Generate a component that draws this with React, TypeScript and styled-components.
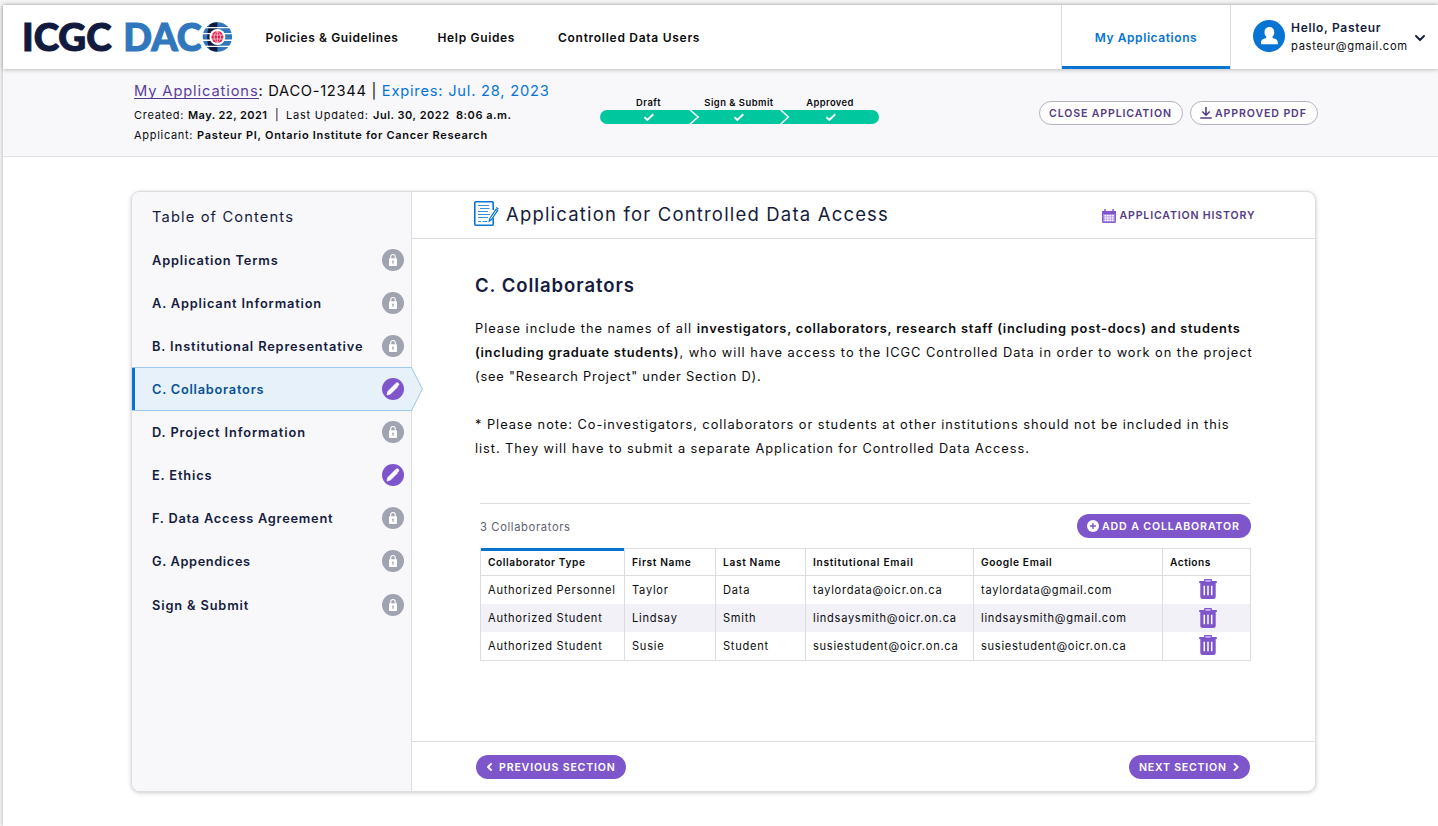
import React from 'react';
import styled, { createGlobalStyle, css } from 'styled-components';

const color = {
  ink: '#0b0b0d',
  navy: '#151c3d',
  blue: '#0774d3',
  purple: '#7f55cc',
  plum: '#543c84',
  green: '#00c79d',
  lock: '#a0a3b0',
  line: '#dcdde1',
  panel: '#f8f8fb',
};

const GlobalStyle = createGlobalStyle`
  * { box-sizing: border-box; }
  body {
    margin: 0;
    background: #f4f4f4;
    color: ${color.ink};
    font-family: 'Inter', 'Open Sans', sans-serif;
    overflow: hidden;
  }
  svg { display: block; flex: none; }
`;

type Tracked = { $ls?: number };
const tracking = css<Tracked>`
  letter-spacing: ${({ $ls = 0.75 }) => $ls}px;
  white-space: pre;
`;

const Page = styled.div`
  height: 821px;
  margin: 5px 0 0 3px;
  background: #fff;
  box-shadow: 0 0 4px rgba(0, 0, 0, 0.28);
`;

/* Header */
const TopBar = styled.header`
  position: relative;
  display: flex;
  height: 64px;
  padding-left: 20px;
  background: #fff;
  box-shadow: 0 1px 4px rgba(0, 0, 0, 0.24);
`;
const LogoLink = styled.a`
  display: flex;
  width: 242.5px;
  padding-top: 11px;
`;
const NavLink = styled.a<Tracked & { $width: number }>`
  ${tracking}
  width: ${({ $width }) => $width}px;
  font-size: 12px;
  font-weight: 600;
  line-height: 66px;
`;
const Tab = styled.a<Tracked>`
  ${tracking}
  width: 170px;
  margin-left: auto;
  border: solid ${color.line};
  border-width: 0 1px;
  box-shadow: inset 0 -3px ${color.blue};
  color: ${color.blue};
  font-size: 12px;
  font-weight: 600;
  line-height: 66px;
  text-align: center;
`;
const User = styled.div`
  display: flex;
  width: 207px;
  padding: 14px 0 0 22px;
`;
const UserText = styled.div`
  width: 130px;
  padding-left: 6px;
`;
const UserName = styled.div<Tracked>`
  ${tracking}
  color: ${color.navy};
  font-size: 12px;
  font-weight: 600;
  line-height: 18px;
`;
const UserEmail = styled.div<Tracked>`
  ${tracking}
  font-size: 11.2px;
  line-height: 18px;
`;
const ChevronBox = styled.div`
  padding-top: 16px;
`;

/* Application summary */
const Summary = styled.section`
  display: flex;
  height: 88px;
  padding: 10px 0 0 131px;
  border-bottom: 1px solid #dfe1e8;
  background: ${color.panel};
`;
const Details = styled.div`
  width: 466px;
`;
const Headline = styled.div`
  display: flex;
  height: 26px;
  font-size: 14.7px;
  line-height: 24px;
`;
const Crumb = styled.a<Tracked>`
  ${tracking}
  height: 20px;
  border-bottom: 1px solid ${color.plum};
  color: #5b3f97;
`;
const Expiry = styled.span<Tracked>`
  ${tracking}
  color: ${color.blue};
`;
const Meta = styled.div`
  display: flex;
  font-size: 11px;
  line-height: 20px;
`;
const Span = styled.span<Tracked & { $w?: number }>`
  ${tracking}
  ${({ $w }) => $w && `width: ${$w}px;`}
`;
const Strong = styled.b<Tracked & { $w?: number }>`
  ${tracking}
  font-weight: 600;
  ${({ $w }) => $w && `width: ${$w}px;`}
`;
const Progress = styled.div`
  width: 279px;
  padding-top: 18px;
`;
const StepLabels = styled.div`
  display: grid;
  grid-template-columns: 97px 84px 98px;
  height: 13px;
`;
const StepLabel = styled.span<Tracked>`
  ${tracking}
  font-size: 9.4px;
  font-weight: 600;
  line-height: 12px;
  text-align: center;
`;
const SummaryActions = styled.div`
  display: flex;
  gap: 7px;
  margin-left: 160px;
  padding-top: 22px;
`;
const OutlineButton = styled.button<Tracked & { $w: number }>`
  ${tracking}
  display: flex;
  align-items: center;
  width: ${({ $w }) => $w}px;
  height: 24px;
  padding: 0 0 0 9px;
  border: 1px solid #b4b2c0;
  border-radius: 12px;
  background: #fff;
  color: ${color.plum};
  font: 600 10.6px 'Inter', sans-serif;
`;

/* Card */
const Card = styled.main`
  display: flex;
  width: 1185px;
  height: 601px;
  margin: 34px 0 0 128px;
  border: 1px solid ${color.line};
  border-radius: 9px;
  background: #fff;
  box-shadow: 0 1px 4px rgba(0, 0, 0, 0.2);
`;
const Sidebar = styled.nav`
  width: 280px;
  border-right: 1px solid ${color.line};
  border-radius: 8px 0 0 8px;
  background: ${color.panel};
  color: ${color.navy};
`;
const TocTitle = styled.div<Tracked>`
  ${tracking}
  height: 47px;
  padding-left: 20px;
  font-size: 14.7px;
  line-height: 51px;
`;
const TocItem = styled.a<Tracked & { $active?: boolean; $last?: boolean }>`
  ${tracking}
  position: relative;
  display: flex;
  align-items: center;
  justify-content: space-between;
  height: 44px;
  margin-top: ${({ $last }) => ($last ? 0 : -1)}px;
  padding: 0 7px 0 20px;
  font-size: 12.8px;
  font-weight: 600;
  ${({ $active }) =>
    $active &&
    css`
      width: 280px;
      padding-right: 8px;
      border: solid #9cc8ee;
      border-width: 1px 0;
      background: #e6f1f9;
      box-shadow: inset 3px 0 ${color.blue};
      color: #0a5295;
    `}
`;
const Pointer = styled.svg`
  position: absolute;
  top: -1px;
  left: 278px;
`;
const Content = styled.div`
  display: flex;
  flex: 1;
  flex-direction: column;
`;
const ContentHeader = styled.div`
  display: flex;
  height: 47px;
  padding: 9px 0 0 62px;
  border-bottom: 1px solid ${color.line};
`;
const Title = styled.h1<Tracked>`
  ${tracking}
  width: 597px;
  margin: 1px 0 0 7px;
  color: ${color.navy};
  font-size: 18.5px;
  font-weight: 400;
  line-height: 24px;
`;
const HistoryLink = styled.a<Tracked>`
  ${tracking}
  display: flex;
  gap: 3.5px;
  height: 14px;
  margin: 8px 0 0 -1px;
  color: ${color.plum};
  font-size: 10.6px;
  font-weight: 600;
  line-height: 14px;
`;
const Body = styled.section`
  flex: 1;
  padding: 34px 0 0 63px;
`;
const SectionTitle = styled.h2<Tracked>`
  ${tracking}
  margin: 0 0 20px;
  color: ${color.navy};
  font-size: 18.5px;
  font-weight: 600;
  line-height: 24px;
`;
const Paragraph = styled.div`
  margin-bottom: 24px;
  font-size: 12.8px;
`;
const Line = styled.div`
  display: flex;
  height: 24px;
  line-height: 24px;
`;
const ListBar = styled.div`
  display: flex;
  justify-content: space-between;
  width: 771px;
  height: 45px;
  margin: 42px 0 0 5px;
  padding-top: 11px;
  background: linear-gradient(${color.line}, ${color.line}) 0 0 / 770px 1px no-repeat;
`;
const Count = styled.span<Tracked>`
  ${tracking}
  color: #5d6072;
  font-size: 11.2px;
  line-height: 27px;
`;
const SolidButton = styled.button<Tracked & { $w: number; $gap: number }>`
  ${tracking}
  display: flex;
  align-items: center;
  gap: ${({ $gap }) => $gap}px;
  width: ${({ $w }) => $w}px;
  height: 24px;
  padding: 0 10px;
  border: 0;
  border-radius: 12px;
  background: ${color.purple};
  color: #fff;
  font: 600 10.6px 'Inter', sans-serif;
`;
const Table = styled.div`
  width: 771px;
  margin-left: 5px;
  border: 1px solid ${color.line};
`;
const Row = styled.div<{ $head?: boolean; $shaded?: boolean }>`
  display: grid;
  grid-template-columns: 144px 91px 90px 168px 189px 87px;
  height: ${({ $head }) => ($head ? 27 : 28)}px;
  ${({ $head }) => $head && `border-bottom: 1px solid ${color.line};`}
  background: ${({ $shaded }) => ($shaded ? '#f2f1f8' : '#fff')};
`;
const Cell = styled.div<Tracked>`
  ${tracking}
  padding-left: 7px;
  border-right: 1px solid ${color.line};
  font-size: 11.1px;
  line-height: 28px;
  &:last-child { border-right: 0; }
`;
const HeadCell = styled(Cell)<{ $sorted?: boolean }>`
  font-size: 10.2px;
  font-weight: 600;
  line-height: 27px;
  ${({ $sorted }) =>
    $sorted &&
    css`
      margin: -1px 1px 0 0;
      border-top: 3px solid ${color.blue};
      border-right: 0;
      box-shadow: 1px 0 ${color.line};
      line-height: 23px;
    `}
`;
const ActionCell = styled(Cell)<{ $drop: number }>`
  padding: ${({ $drop }) => 3 + $drop}px 0 0 36px;
`;
const Footer = styled.footer`
  display: flex;
  justify-content: space-between;
  height: 50px;
  padding: 13px 65px 0 64px;
  border-top: 1px solid ${color.line};
`;

/* Drawings */
const Logo = () => (
  <svg width="212" height="44" viewBox="0 -4 212 44" overflow="visible">
    <g fontFamily="Lato, sans-serif" fontWeight="900" fontSize="38.4" strokeWidth="1.1">
      <text x="-1" y="30.7" textLength="89.500" lengthAdjust="spacingAndGlyphs" fill="#121a3d" stroke="#121a3d">ICGC</text>
      <text x="100.3" y="30.7" textLength="78.500" lengthAdjust="spacingAndGlyphs" fill="#3077bd" stroke="#3077bd">DAC</text>
    </g>
    <circle cx="194.4" cy="17" r="15.6" fill="#fff" />
    <circle cx="194.4" cy="17" r="14.7" fill="#3077bd" />
    <path d="M194.4 2.3v29.4c-3 0-5.400-.8-7.600-2.200-3.400-5-3.400-20 0-25 2.200-1.400 4.600-2.200 7.600-2.200z" fill="#121a3d" />
    <path d="M178 7.600h32M178 13.600h32M178 20.200h32M178 26.400h32" stroke="#fff" strokeWidth="1.400" />
    <circle cx="194.400" cy="17" r="8" fill="#fff" />
    <circle cx="194.400" cy="17" r="6" fill="#e4204f" />
    <path d="M188 15h13M188 19h13M194.400 11v12M194.400 11c-4.300 3.500-4.300 8.500 0 12M194.400 11c4.300 3.500 4.300 8.500 0 12" fill="none" stroke="#fff" strokeWidth=".6" />
  </svg>
);

const Avatar = () => (
  <svg width="32" height="32" viewBox="0 0 32 32">
    <circle cx="16" cy="17" r="16" fill={color.blue} />
    <path d="M16.300 8c3.100 0 5 2.300 5 5.200 0 1.900-.7 3.600-1.900 4.500 0 1 .5 1.400 1.500 1.700 2.500.6 3.900 1.600 3.900 4.100v1.400c0 .1 0 .3-.1.300H8.100c-.1 0-.1-.2-.1-.3v-1.400c0-2.500 1.400-3.500 3.900-4.100 1-.3 1.500-.7 1.500-1.700-1.200-.9-1.900-2.600-1.900-4.500C11.500 10.300 13.200 8 16.300 8z" fill="#fff" />
  </svg>
);

const AvatarBox = styled.div`
  padding-top: 1px;
  svg { overflow: visible; margin-top: -1px; }
`;

const Chevron = ({ w, h, d, stroke }: { w: number; h: number; d: string; stroke: string }) => (
  <svg width={w} height={h} viewBox={`0 0 ${w} ${h}`} fill="none" stroke={stroke} strokeWidth="1.900" strokeLinecap="round" strokeLinejoin="round">
    <path d={d} />
  </svg>
);

const ProgressTrack = () => (
  <svg width="279" height="14" viewBox="0 0 279 14" fill="none" stroke="#fff">
    <rect width="279" height="14" rx="7" fill={color.green} stroke="none" />
    <path d="M89.500-.5l8.700 7.500-8.700 7.500M180.300-.5l8 7.500-8 7.500" strokeWidth="1.500" />
    <path d="M44.500 7.300l2.800 2.700 6-5.800M134.500 7.300l2.800 2.700 6-5.800M226.500 7.300l2.800 2.700 6-5.800" strokeWidth="1.900" />
  </svg>
);

const Download = () => (
  <svg width="15" height="12" viewBox="0 0 15 12" fill="none" stroke={color.plum} strokeWidth="1.600">
    <path d="M6 0v8M2.300 4.500L6 8.200l3.700-3.700M.3 11h11.400" />
  </svg>
);

const LockBadge = () => (
  <svg width="22" height="22" viewBox="0 0 22 22">
    <circle cx="11" cy="11" r="11" fill={color.lock} />
    <path d="M8.700 10V8c0-1.500.9-2.500 2.300-2.500s2.300 1 2.300 2.500v2" fill="none" stroke="#fff" strokeWidth="1.100" />
    <rect x="7" y="9.300" width="8" height="7.700" rx=".8" fill="#fff" />
    <path d="M11 11.600a1 1 0 0 1 .5 1.800v1.600h-1v-1.600a1 1 0 0 1 .5-1.800z" fill={color.lock} />
  </svg>
);

const PencilBadge = () => (
  <svg width="22" height="22" viewBox="0 0 22 22">
    <circle cx="11" cy="11" r="11" fill={color.purple} />
    <path d="M5 17l.8-3.500 7.200-7.200 2.600 2.600-7.200 7.200zM13.300 6l.8-.8c.7-.7 1.500-.7 2.200 0s.7 1.500 0 2.200l-.8.8z" fill="#fff" stroke="#fff" strokeWidth=".7" strokeLinejoin="round" />
  </svg>
);

const FormIcon = () => (
  <svg width="25" height="25" viewBox="0 0 25 25" fill="none" stroke={color.blue}>
    <path d="M19.200 9V1.800a1 1 0 0 0-1-1H1.800a1 1 0 0 0-1 1v21.400a1 1 0 0 0 1 1h16.400a1 1 0 0 0 1-1V17" strokeWidth="1.600" />
    <path d="M4 4.500h11M6 7.500h9.500M4 10.500h10M4 13.500h12M4 16.500h10M4 20.500h3M8.500 20.500h5" strokeWidth="1" opacity=".8" />
    <path d="M15.200 20.200l.6-2.700L22 8.300l1.700 1.100-6.200 9.200z" fill="#fff" strokeWidth="1.200" />
    <path d="M22.200 6.500l2.300 1.500" strokeWidth="1.400" />
  </svg>
);

const Calendar = () => (
  <svg width="14" height="14" viewBox="0 0 14 14">
    <path d="M3 0v3M11 0v3" stroke={color.purple} strokeWidth="1.500" />
    <rect x=".6" y="2" width="12.800" height="11.400" rx="1" fill="#a98be0" />
    <path d="M.5 2h13v3H.5z" fill={color.purple} />
    <path d="M2.500 6h2v1.500h-2zM5 6h1.800v1.500H5zM7.400 6h1.800v1.500H7.400zM9.800 6h1.800v1.500H9.800zM2.500 8.300h2v1.500h-2zM5 8.300h1.800v1.500H5zM7.400 8.300h1.800v1.500H7.400zM9.800 8.300h1.800v1.500H9.800zM2.500 10.600h2v1.500h-2zM5 10.600h1.800v1.500H5zM7.400 10.600h1.800v1.500H7.400zM9.800 10.600h1.800v1.500H9.800z" fill="#fff" />
    <path d="M.6 2v11.400h12.800V2" fill="none" stroke={color.purple} strokeWidth="1" />
  </svg>
);

const PlusCircle = () => (
  <svg width="12" height="12" viewBox="0 0 12 12">
    <circle cx="6" cy="6" r="6" fill="#fff" />
    <path d="M6 3v6M3 6h6" stroke={color.purple} strokeWidth="1.400" />
  </svg>
);

const Trash = () => (
  <svg width="18" height="20" viewBox="0 0 18 20">
    <rect x="5.700" y=".7" width="6.600" height="3" rx=".5" fill="#e2d7f5" stroke={color.purple} strokeWidth="1.400" />
    <path d="M.7 2h16.600a.6.600 0 0 1 .6.600v1.500H.1V2.600A.6.600 0 0 1 .7 2zM1.300 4h15.400v13.500A2.500 2.500 0 0 1 14.200 20H3.800a2.500 2.500 0 0 1-2.500-2.500z" fill={color.purple} />
    <path d="M6.500 1.400h5v1.300h-5z" fill="#d5c6f0" />
    <path d="M5.300 6.800v9.400M9 6.800v9.400M12.700 6.800v9.400" stroke="#fff" strokeWidth="1.500" />
  </svg>
);

const toc = [
  { label: 'Application Terms', ls: 0.83 },
  { label: 'A. Applicant Information', ls: 0.82 },
  { label: 'B. Institutional Representative', ls: 0.86 },
  { label: 'C. Collaborators', ls: 0.76, open: true, active: true },
  { label: 'D. Project Information', ls: 0.9 },
  { label: 'E. Ethics', ls: 0.85, open: true },
  { label: 'F. Data Access Agreement', ls: 0.75 },
  { label: 'G. Appendices', ls: 0.62 },
  { label: 'Sign & Submit', ls: 0.86 },
];

const people = [
  ['Authorized Personnel', 'Taylor', 'Data', 'taylordata@oicr.on.ca', 'taylordata@gmail.com'],
  ['Authorized Student', 'Lindsay', 'Smith', 'lindsaysmith@oicr.on.ca', 'lindsaysmith@gmail.com'],
  ['Authorized Student', 'Susie', 'Student', 'susiestudent@oicr.on.ca', 'susiestudent@oicr.on.ca'],
];

export default function App() {
  return (
    <>
      <GlobalStyle />
      <Page>
        <TopBar>
          <LogoLink><Logo /></LogoLink>
          <NavLink $width={172} $ls={0.6}>Policies &amp; Guidelines</NavLink>
          <NavLink $width={120.5} $ls={0.66}>Help Guides</NavLink>
          <NavLink $width={160} $ls={0.72}>Controlled Data Users</NavLink>
          <Tab $ls={0.58}>My Applications</Tab>
          <User>
            <AvatarBox><Avatar /></AvatarBox>
            <UserText>
              <UserName $ls={0.68}>Hello, Pasteur</UserName>
              <UserEmail $ls={0.67}>pasteur@gmail.com</UserEmail>
            </UserText>
            <ChevronBox>
              <Chevron w={10} h={7} d="M1 1l4 4 4-4" stroke={color.navy} />
            </ChevronBox>
          </User>
        </TopBar>

        <Summary>
          <Details>
            <Headline>
              <Crumb $ls={0.88}>My Applications</Crumb>
              <Span $ls={0.69}>: DACO-12344 | </Span>
              <Expiry $ls={0.78}>Expires: Jul. 28, 2023</Expiry>
            </Headline>
            <Meta>
              <Span $ls={0.71} $w={54}>Created:</Span>
              <Strong $ls={0.44} $w={87}>May. 22, 2021</Strong>
              <Span $w={11}>|</Span>
              <Span $ls={0.79} $w={87}>Last Updated:</Span>
              <Strong $ls={0.51}>Jul. 30, 2022  8:06 a.m.</Strong>
            </Meta>
            <Meta>
              <Span $ls={0.7} $w={63}>Applicant:</Span>
              <Strong $ls={0.69}>Pasteur PI, Ontario Institute for Cancer Research</Strong>
            </Meta>
          </Details>
          <Progress>
            <StepLabels>
              <StepLabel $ls={0.5}>Draft</StepLabel>
              <StepLabel $ls={0.49}>Sign &amp; Submit</StepLabel>
              <StepLabel $ls={0.38}>Approved</StepLabel>
            </StepLabels>
            <ProgressTrack />
          </Progress>
          <SummaryActions>
            <OutlineButton $w={144} $ls={0.85}>CLOSE APPLICATION</OutlineButton>
            <OutlineButton $w={128} $ls={0.88}><Download />APPROVED PDF</OutlineButton>
          </SummaryActions>
        </Summary>

        <Card>
          <Sidebar>
            <TocTitle $ls={1.13}>Table of Contents</TocTitle>
            {toc.map(({ label, ls, open, active }, i) => (
              <TocItem key={label} $ls={ls} $active={active} $last={i === toc.length - 1}>
                {label}
                {open ? <PencilBadge /> : <LockBadge />}
                {active && (
                  <Pointer width="13" height="44" viewBox="0 0 13 44">
                    <path d="M0 .5h1.500L12.400 22 1.500 43.500H0z" fill="#e6f1f9" />
                    <path d="M0 .5h1.500L12.400 22 1.500 43.500H0" fill="none" stroke="#9cc8ee" />
                  </Pointer>
                )}
              </TocItem>
            ))}
          </Sidebar>
          <Content>
            <ContentHeader>
              <FormIcon />
              <Title $ls={1.18}>Application for Controlled Data Access</Title>
              <HistoryLink $ls={0.83}><Calendar />APPLICATION HISTORY</HistoryLink>
            </ContentHeader>
            <Body>
              <SectionTitle $ls={0.95}>C. Collaborators</SectionTitle>
              <Paragraph>
                <Line>
                  <Span $ls={0.96}>Please include the names of all </Span>
                  <Strong $ls={0.78}>investigators, collaborators, research staff (including post-docs) and students</Strong>
                </Line>
                <Line>
                  <Strong $ls={0.75}>(including graduate students)</Strong>
                  <Span $ls={0.98}>, who will have access to the ICGC Controlled Data in order to work on the project</Span>
                </Line>
                <Line><Span $ls={0.8}>(see "Research Project" under Section D).</Span></Line>
              </Paragraph>
              <Paragraph>
                <Line><Span $ls={0.97}>* Please note: Co-investigators, collaborators or students at other institutions should not be included in this</Span></Line>
                <Line><Span $ls={0.94}>list. They will have to submit a separate Application for Controlled Data Access.</Span></Line>
              </Paragraph>
              <ListBar>
                <Count $ls={0.64}>3 Collaborators</Count>
                <SolidButton $w={174} $gap={3} $ls={0.87}><PlusCircle />ADD A COLLABORATOR</SolidButton>
              </ListBar>
              <Table>
                <Row $head>
                  <HeadCell $sorted $ls={0.56}>Collaborator Type</HeadCell>
                  <HeadCell $ls={0.62}>First Name</HeadCell>
                  <HeadCell $ls={0.64}>Last Name</HeadCell>
                  <HeadCell $ls={0.71}>Institutional Email</HeadCell>
                  <HeadCell $ls={0.6}>Google Email</HeadCell>
                  <HeadCell $ls={0.48}>Actions</HeadCell>
                </Row>
                {people.map((person, i) => (
                  <Row key={i} $shaded={i === 1}>
                    {person.map((value, j) => (
                      <Cell key={j} $ls={j > 2 ? 0.71 : 0.74}>{value}</Cell>
                    ))}
                    <ActionCell $drop={i === 1 ? 1 : 0}><Trash /></ActionCell>
                  </Row>
                ))}
              </Table>
            </Body>
            <Footer>
              <SolidButton $w={150} $gap={6} $ls={0.82}>
                <Chevron w={7} h={10} d="M5 2L2 5l3 3" stroke="#fff" />
                PREVIOUS SECTION
              </SolidButton>
              <SolidButton $w={121} $gap={5} $ls={0.77}>
                NEXT SECTION
                <Chevron w={7} h={10} d="M2.500 1.800L5.700 5 2.500 8.200" stroke="#fff" />
              </SolidButton>
            </Footer>
          </Content>
        </Card>
      </Page>
    </>
  );
}
